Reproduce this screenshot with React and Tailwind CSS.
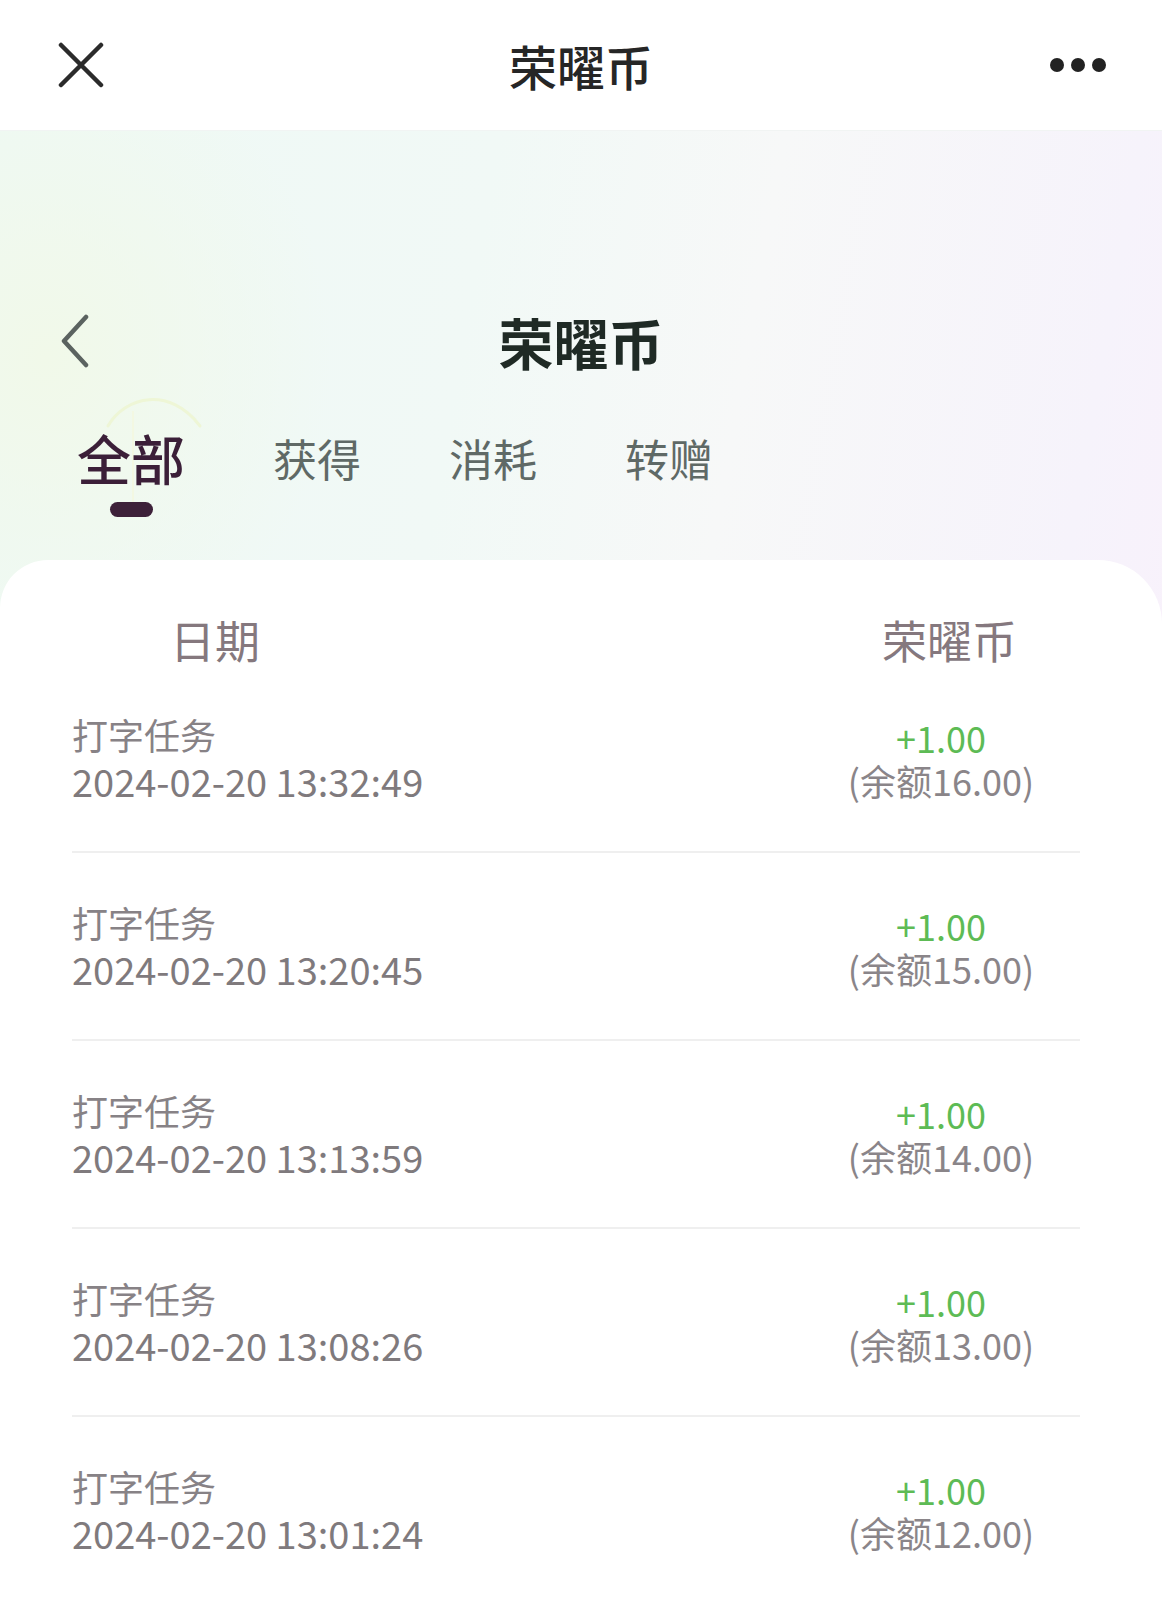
import React from "react";

const records = [
    { time: "2024-02-20 13:32:49", amount: "+1.00", balance: "16.00" },
    { time: "2024-02-20 13:20:45", amount: "+1.00", balance: "15.00" },
    { time: "2024-02-20 13:13:59", amount: "+1.00", balance: "14.00" },
    { time: "2024-02-20 13:08:26", amount: "+1.00", balance: "13.00" },
    { time: "2024-02-20 13:01:24", amount: "+1.00", balance: "12.00" },
];

const tabs = ["全部", "获得", "消耗", "转赠"];

function CloseIcon() {
    return (
        <svg width="46" height="46" viewBox="0 0 46 46" fill="none">
            <path d="M3 3L43 43M43 3L3 43" stroke="#2b2b2b" strokeWidth="4.5" strokeLinecap="round" />
        </svg>
    );
}

function MoreIcon() {
    return (
        <svg width="58" height="16" viewBox="0 0 58 16" fill="#222">
            <circle cx="7" cy="8" r="7" />
            <circle cx="28" cy="8" r="7" />
            <circle cx="49" cy="8" r="7" />
        </svg>
    );
}

function BackIcon() {
    return (
        <svg width="30" height="54" viewBox="0 0 30 54" fill="none">
            <path d="M26 3L4 27L26 51" stroke="#5b6360" strokeWidth="4.5" strokeLinecap="round" strokeLinejoin="round" />
        </svg>
    );
}

export default function App() {
    return (
        <div className="w-full min-h-[1600px] bg-white font-[family-name:'Noto_Sans_CJK_SC',sans-serif] overflow-hidden">
            {/* 顶部栏 */}
            <div className="h-[131px] bg-white flex items-center border-b border-[#f1f4f3]">
                <div className="w-[180px] pl-[58px] flex items-center">
                    <CloseIcon />
                </div>
                <div className="flex-1 text-center text-[48px] leading-none font-medium text-[#262626]">荣曜币</div>
                <div className="w-[180px] pr-[54px] flex justify-end">
                    <MoreIcon />
                </div>
            </div>

            <div className="relative pt-[160px] bg-[radial-gradient(ellipse_at_4%_15%,#f1f9e9_0%,transparent_18%),linear-gradient(100deg,#eef9f5_0%,#f1f9f6_35%,#f7f8f8_55%,#f6f3fb_80%,#fbeffb_100%)]">
                {/* 装饰 */}
                <svg className="absolute left-[100px] top-[250px]" width="120" height="140" viewBox="0 0 120 140" fill="none">
                    <path d="M8 45C25 15 70 5 100 45" stroke="#eef6d6" strokeWidth="3" strokeLinecap="round" />
                    <path d="M33 30V135" stroke="#f3f8e2" strokeWidth="2" />
                </svg>

                <div className="relative h-[100px] flex items-center">
                    <div className="w-[180px] pl-[60px] flex items-center">
                        <BackIcon />
                    </div>
                    <div className="flex-1 text-center text-[55px] leading-none font-bold text-[#1f2a25]">荣曜币</div>
                    <div className="w-[180px]" />
                </div>

                <div className="relative flex items-start pl-[77px] gap-[88px] mt-[40px]">
                    {tabs.map((t, i) => (
                        <div key={t} className="flex flex-col items-center">
                            <div className="h-[54px] flex items-center">
                                {i === 0 ? (
                                    <span className="text-[54px] leading-none font-medium text-[#3b1f38]">{t}</span>
                                ) : (
                                    <span className="text-[44px] leading-none text-[#5f6966]">{t}</span>
                                )}
                            </div>
                            {i === 0 && <div className="mt-[17px] w-[43px] h-[15px] rounded-full bg-[#3d2139]" />}
                        </div>
                    ))}
                </div>

                {/* 列表卡片 */}
                <div className="relative mt-[43px] bg-white rounded-tl-[48px] rounded-tr-[64px] pl-[72px] pr-[82px] pt-[57px] pb-[40px]">
                    <div className="flex justify-between text-[45px] leading-none text-[#85787e] mb-[3px]">
                        <span className="pl-[98px]">日期</span>
                        <span className="mr-[63px]">荣曜币</span>
                    </div>

                    {records.map((r, i) => (
                        <div
                            key={r.time}
                            className={`flex justify-between items-center py-[48px] ${i < records.length - 1 ? "border-b-2 border-[#efefef]" : ""}`}
                        >
                            <div className="flex flex-col gap-[4px]">
                                <span className="text-[36px] leading-[42px] text-[#878286]">打字任务</span>
                                <span className="text-[38px] leading-[44px] text-[#7f7a7d]">{r.time}</span>
                            </div>
                            <div className="w-[200px] mr-[39px] flex flex-col items-center gap-[1px]">
                                <span className="text-[36px] leading-[42px] text-[#5dbb55]">{r.amount}</span>
                                <span className="text-[36px] leading-[42px] text-[#8a8589]">(余额{r.balance})</span>
                            </div>
                        </div>
                    ))}
                </div>
            </div>
        </div>
    );
}
